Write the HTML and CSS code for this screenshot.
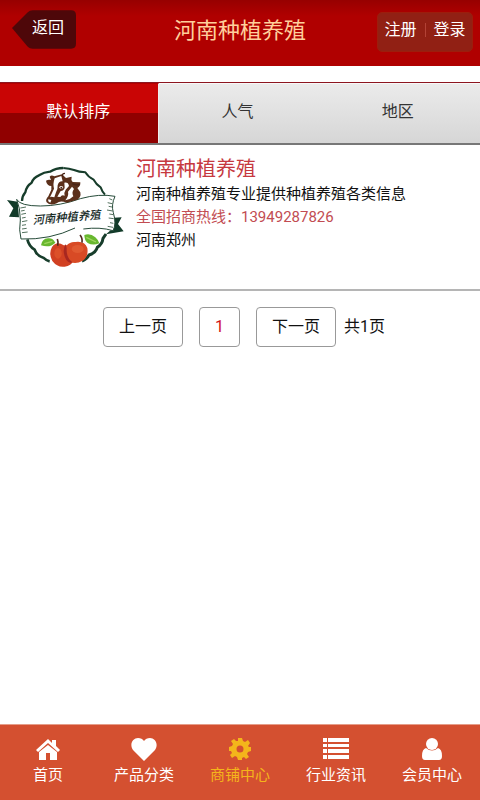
FILE: index.html
```html
<!DOCTYPE html>
<html lang="zh-CN">
<head>
    <meta charset="UTF-8">
    <meta name="viewport" content="width=device-width, initial-scale=1">
    <title>河南种植养殖</title>
    <link rel="stylesheet" href="styles.css">
</head>
<body>
<header class="header">
    <a class="back" href="#">
        <svg class="back-bg" viewBox="0 0 66 40"><path d="M1 18L17 2Q19 0 22 0H61Q66 0 66 5V34Q66 39 61 39H22Q19 39 17 37Z"/></svg>
        <span>返回</span>
    </a>
    <h1>河南种植养殖</h1>
    <div class="user">
        <a href="#">注册</a>
        <i></i>
        <a href="#">登录</a>
    </div>
</header>

<nav class="tabs">
    <a class="on" href="#">默认排序</a>
    <a href="#">人气</a>
    <a href="#">地区</a>
</nav>

<main class="main">
    <div class="shop">
        <svg class="logo" viewBox="0 0 390 390">
            <g fill="none" stroke="#173d2b" stroke-width="7" stroke-linejoin="round">
                <path d="M66 153Q66 139 76 127Q79 108 95 98Q100 83 117 76Q132 66 150 65Q168 54 190 54"/>
                <path d="M190 54Q208 56 222 60Q237 66 256 67Q265 82 281 89Q289 104 302 112Q306 124 315 134" stroke-width="6"/>
                <path d="M82 268Q87 289 104 299Q111 318 130 323Q139 332 149 334" stroke-width="8"/>
                <path d="M246 333Q260 328 267 315Q287 309 292 292Q307 282 309 265L318 252" stroke-width="9"/>
            </g>
            <path d="M21 150L53 155L57 202L27 200L40 175ZM342 203L365 202L354 222L371 244L318 253L342 232Z" fill="#123b29"/>
            <path d="M53 151Q52 168 121 168Q180 168 241 146Q299 130 341 142Q333 165 340 188Q350 222 339 242Q280 224 220 246Q126 277 63 262Q57 240 61 210Q61 174 53 151Z" fill="#fff"/>
            <path d="M225 234Q150 270 63 267Q56 240 61 210Q61 174 50 148Q60 168 121 168Q180 168 241 146Q299 130 345 139Q333 165 340 188Q350 222 339 242Q300 230 250 237" fill="none" stroke="#264b39" stroke-width="3"/>
            <path d="M61 174L78 171M63 183L74 181M64 193L78 190M66 204L77 202M66 215L82 212M66 226L78 224M66 237L80 235M66 248L83 246M328 146L337 150M323 158L336 161M326 169L336 171M321 180L338 183M328 192L340 194M326 204L341 206M330 218L340 220M323 229L339 232" stroke="#54725f" stroke-width="3"/>
            <text class="logo-text" x="99" y="223" transform="rotate(-5 99 223)">河南种植养殖</text>
            <path d="M138 92Q145 88 153 90L149 80Q154 73 163 79L186 73L198 84L215 80Q212 90 218 96L241 97Q242 110 232 114L241 127Q244 142 232 149L200 158Q180 150 170 160Q151 169 140 157Q135 150 145 139L154 119V108Q140 107 138 92Z" fill="#5b301b"/>
            <path d="M164 85L184 78L188 94Q176 93 173 106Q174 116 168 127L163 142Q153 138 150 142L162 116Q158 102 164 85ZM193 98Q205 96 207 108L197 119Q191 128 194 137Q185 133 181 141L172 140L182 123Q192 122 194 113ZM216 110L222 117Q214 127 220 139Q211 149 196 151Q207 137 204 125ZM145 148L154 150L151 158Q143 156 145 148Z" fill="#fff"/>
            <path d="M177 112Q184 104 190 112Q184 121 177 112" fill="#fff"/>
            <circle cx="184" cy="113" r="3" fill="#492416"/>
            <path d="M188 80Q185 70 195 70M217 101Q229 107 239 103" fill="none" stroke="#492416" stroke-width="4"/>
            <path d="M123 286Q126 266 144 265Q158 263 166 278Q150 295 123 286ZM253 255Q271 249 286 262Q295 270 298 280Q279 288 263 279Q253 271 253 255Z" fill="#68b82f"/>
            <path d="M133 281L157 274M259 262L288 276" stroke="#a0d661" stroke-width="4"/>
            <path d="M191 286Q170 272 156 291Q145 311 157 333Q172 353 194 350Q214 347 220 333L202 286Z" fill="#d14022"/>
            <path d="M199 287Q211 274 226 276Q254 272 262 294Q266 321 248 332Q228 344 211 336Q193 318 199 287Z" fill="#d84a25"/>
            <path d="M197 282Q184 304 199 330Q207 341 217 337Q198 322 200 295Z" fill="#a82720"/>
            <ellipse cx="233" cy="297" rx="18" ry="12" fill="#e05a31"/>
            <ellipse cx="174" cy="310" rx="11" ry="16" fill="#dc5029"/>
            <path d="M173 287Q176 277 172 267M246 278Q248 264 240 255" fill="none" stroke="#51271d" stroke-width="5"/>
        </svg>
        <div class="info">
            <h2><a href="#">河南种植养殖</a></h2>
            <p>河南种植养殖专业提供种植养殖各类信息</p>
            <p class="tel">全国招商热线：13949287826</p>
            <p>河南郑州</p>
        </div>
    </div>

    <div class="page">
        <a href="#">上一页</a>
        <a class="cur" href="#">1</a>
        <a href="#">下一页</a>
        <span>共1页</span>
    </div>
</main>

<footer class="footer">
    <a href="#">
        <svg viewBox="0 0 26 24"><path d="M1 13L13 2L17 6V3H21V9L25 13L23 15L13 6L3 15Z"/><path d="M4 15L13 8L22 15V23H15V16H11V23H4Z"/></svg>
        <span>首页</span>
    </a>
    <a href="#">
        <svg viewBox="0 0 26 24"><path d="M13 24L2 13C-2 7 2 1 7 1Q11 1 13 4Q15 1 19 1C24 1 28 7 24 13Z"/></svg>
        <span>产品分类</span>
    </a>
    <a class="on" href="#">
        <svg viewBox="0 0 26 24"><path fill-rule="evenodd" d="M11 1H15L16 4L18 5L21 3L23 6L21 9L22 10H24V14L21 15L20 17L22 20L19 22L17 20L15 21V23H11L10 20L8 19L5 21L3 18L5 16L4 14H2V10L5 9L6 7L4 4L7 2L9 4L11 4ZM13 8.500A3.500 3.500 0 1 0 13 15.500A3.500 3.500 0 1 0 13 8.500Z"/></svg>
        <span>商铺中心</span>
    </a>
    <a href="#">
        <svg viewBox="0 0 26 24"><path d="M0 1H4V5H0ZM5 1H26V5H5ZM0 7H4V10H0ZM5 7H26V10H5ZM0 12H4V16H0ZM5 12H26V16H5ZM0 18H4V22H0ZM5 18H26V22H5Z"/></svg>
        <span>行业资讯</span>
    </a>
    <a href="#">
        <svg viewBox="0 0 26 24"><path d="M7 11Q3 12 3 19Q3 23 6 23H20Q23 23 23 19Q23 12 19 11Q13 16 7 11Z"/><circle cx="13" cy="7" r="6"/></svg>
        <span>会员中心</span>
    </a>
</footer>
</body>
</html>
```
FILE: styles.css
```css
* {
    margin: 0;
    padding: 0;
    box-sizing: border-box;
}

body {
    display: flex;
    flex-direction: column;
    min-height: 100vh;
    background-color: #fff;
    color: #111;
    font-family: Roboto, "Noto Sans CJK SC", sans-serif;
    font-size: 16px;
}

a {
    color: inherit;
    text-decoration: none;
}

h1, h2 {
    font-weight: 400;
}

/* 头部 */
.header {
    display: grid;
    grid-template-columns: 1fr auto 1fr;
    align-items: start;
    height: 66px;
    padding: 10px 7px 0;
    background: linear-gradient(#970000, #b00000 16px);
    color: #fff;
}

.header h1 {
    color: #ffcf9c;
    font-size: 22px;
    line-height: 42px;
}

.back {
    position: relative;
    width: 65px;
    margin-left: 4px;
    padding-left: 21px;
    line-height: 36px;
}

.back-bg {
    position: absolute;
    top: 0;
    left: 0;
    width: 65px;
    height: 40px;
    fill: #4e0709;
}

.back span {
    position: relative;
}

.user {
    display: flex;
    justify-content: center;
    justify-self: end;
    gap: 8px;
    width: 96px;
    height: 40px;
    margin-top: 2px;
    border: 1px solid #9d1d0c;
    border-radius: 5px;
    background-color: #912014;
    line-height: 34px;
}

.user i {
    width: 1px;
    height: 14px;
    margin-top: 10px;
    background-color: #b34236;
}

/* 排序 */
.tabs {
    display: flex;
    margin-top: 16px;
    border-top: 1px solid #8c1620;
    border-bottom: 2px solid #777;
}

.tabs a {
    flex: 1;
    height: 60px;
    padding-right: 4px;
    border-top: 1px solid #f8f8f8;
    background: linear-gradient(#ebebeb, #d6d6d6);
    line-height: 56px;
    text-align: center;
    color: #333;
}

.tabs .on {
    padding-right: 2px;
    border-top-color: #b40000;
    border-right: 1px solid #eee;
    background: linear-gradient(#c90505 50%, #900000 50%);
    color: #fff;
}

/* 列表 */
.main {
    flex: 1;
}

.shop {
    display: flex;
    gap: 6px;
    min-height: 146px;
    padding-top: 5px;
    border-bottom: 2px solid #b5b5b5;
}

.logo {
    flex: none;
    width: 130px;
    height: 130px;
}

.logo-text {
    font-family: "Noto Sans CJK SC", sans-serif;
    font-size: 34px;
    font-style: italic;
    font-weight: 500;
    fill: #14291f;
}

.info {
    padding-top: 6px;
    font-size: 15px;
    line-height: 23px;
}

.info h2 {
    color: #c6393f;
    font-size: 20px;
    line-height: 27px;
}

.info .tel {
    color: #c24c52;
}

.page {
    display: flex;
    justify-content: center;
    margin-top: 16px;
    padding-left: 8px;
    line-height: 38px;
}

.page a {
    height: 40px;
    margin-right: 16px;
    padding: 0 15px;
    border: 1px solid #999;
    border-radius: 4px;
}

.page a:nth-child(3) {
    margin-right: 8px;
}

.page span {
    line-height: 40px;
}

.page .cur {
    color: #d20f18;
}

/* 底部导航 */
.footer {
    display: flex;
    height: 76px;
    border-top: 1px solid #e59d89;
    background-color: #d45030;
    color: #fff;
    font-size: 15px;
}

.footer a {
    display: flex;
    flex: 1;
    flex-direction: column;
    align-items: center;
    padding-top: 12px;
    line-height: 28px;
}

.footer svg {
    width: 26px;
    height: 24px;
    fill: currentColor;
}

.footer .on {
    color: #f4b51b;
}
```
